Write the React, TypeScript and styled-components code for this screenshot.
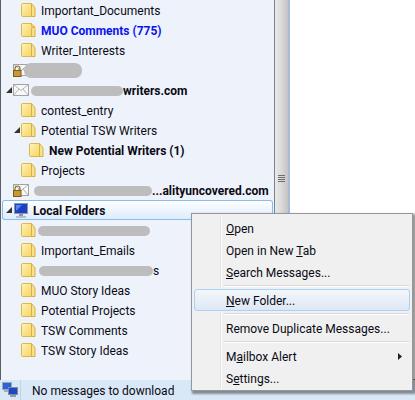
import React from "react";
import styled, { createGlobalStyle } from "styled-components";

const Global = createGlobalStyle`
  html, body { margin: 0; padding: 0; background: #fff; }
  body { font-family: Roboto, "Noto Sans", sans-serif; font-size: 12px; color: #0a0a14; }
`;

const Win = styled.div`
  position: relative;
  width: 415px;
  height: 400px;
  overflow: hidden;
  display: grid;
  grid-template-rows: 380px 20px;
`;
const Panes = styled.div`
  display: grid;
  grid-template-columns: 274px 16px 1fr;
  min-height: 0;
`;
const Tree = styled.div`
  background: #eef3fb;
  border-left: 1px solid #5a5f66;
  display: flex;
  flex-direction: column;
  overflow: hidden;
`;
const Row = styled.div<{ $level: number; $selected?: boolean }>`
  flex: 0 0 20px;
  height: 20px;
  box-sizing: border-box;
  display: flex;
  align-items: center;
  white-space: nowrap;
  padding-left: ${(p) => 5 + p.$level * 8}px;
  ${(p) =>
    p.$selected
      ? `margin: 0 1px 0 1px; padding-left: ${4 + p.$level * 8}px;
         box-shadow: inset 0 0 0 1px #84bdf0;
         border-radius: 3px;
         background: linear-gradient(#ffffff, #dcebfb);`
      : ""}
`;
const TwistySlot = styled.span`
  flex: 0 0 7px;
  height: 7px;
  display: flex;
  align-items: center;
`;
const Label = styled.span<{ $bold?: boolean; $color?: string }>`
  margin-left: 4px;
  padding-top: 1px;
  display: flex;
  align-items: center;
  font-weight: ${(p) => (p.$bold ? 700 : 400)};
  color: ${(p) => p.$color || "#0a0a14"};
`;
const Blob = styled.span<{ $w: number; $h?: number; $r?: number; $ml?: number }>`
  display: inline-block;
  width: ${(p) => p.$w}px;
  height: ${(p) => p.$h || 10}px;
  margin-left: ${(p) => p.$ml ?? -2}px;
  background: #bdbdbd;
  border-radius: ${(p) => p.$r ?? 5}px;
`;
const Scrollbar = styled.div`
  box-sizing: border-box;
  border-left: 1px solid #7f8287;
  border-right: 2px solid #a9bbd2;
  background: linear-gradient(90deg, #e9e9e9, #dcdcdc 45%, #c4c4c4);
  display: flex;
  flex-direction: column;
  align-items: center;
  padding-top: 175px;
  gap: 1px;
`;
const Grip = styled.i`
  display: block;
  width: 7px;
  height: 1px;
  background: #6d6d6d;
`;
const Content = styled.div`
  background: #fff;
  border-bottom: 1px solid #8a8a8a;
`;
const Status = styled.div`
  background: #d9e8f7;
  display: flex;
  align-items: center;
  height: 20px;
`;
const StatusIcon = styled.div`
  flex: 0 0 21px;
  height: 20px;
  box-sizing: border-box;
  border-right: 1px solid #c3d3e4;
  display: flex;
  align-items: center;
  justify-content: center;
`;
const StatusText = styled.span`
  margin-left: 11px;
  padding-top: 1px;
`;
const Menu = styled.div`
  position: absolute;
  left: 191px;
  top: 213px;
  width: 222px;
  height: 178px;
  box-sizing: border-box;
  border: 1px solid #979797;
  background: #f0f0f0;
  box-shadow: 2px 2px 2px 1px rgba(0, 0, 0, 0.4);
  padding: 3px 2px;
  display: flex;
  flex-direction: column;
  &::before {
    content: "";
    position: absolute;
    left: 28px;
    top: 2px;
    bottom: 2px;
    width: 1px;
    background: #e2e3e3;
    box-shadow: 1px 0 0 #fff;
  }
`;
const Item = styled.div<{ $active?: boolean }>`
  position: relative;
  flex: 0 0 22px;
  height: 22px;
  box-sizing: border-box;
  display: flex;
  align-items: center;
  justify-content: space-between;
  padding: 1px 8px 0 32px;
  border-radius: 3px;
  ${(p) =>
    p.$active
      ? `border: 1px solid #a8d2f7; padding: 1px 7px 0 31px;
         background: linear-gradient(#f3f6fa, #dde8f5);`
      : ""}
`;
const Sep = styled.div`
  flex: 0 0 2px;
  height: 2px;
  box-sizing: border-box;
  margin: 2px 1px 2px 30px;
  background: #d7d7d7;
  border-bottom: 1px solid #fff;
`;

const Folder = ({ fresh }: { fresh?: boolean }) => (
  <svg width="16" height="14" viewBox="0 0 16 14" style={{ flex: "0 0 16px" }}>
    <defs>
      <linearGradient id="fg" x1="0" x2="1" y1="0" y2="1">
        <stop offset="0" stopColor="#fff3b4" />
        <stop offset="1" stopColor="#f6d468" />
      </linearGradient>
    </defs>
    <path d="M0.5 1.5 Q0.5 .5 1.5 .5 H10.5 V13.5 H1.5 Q0.5 13.5 .5 12.5Z" fill="url(#fg)" stroke="#dcb94f" />
    <path d="M10.5 .5 L14 5 V13.5 H10.5Z" fill="#f9e08a" stroke="#d8b13f" />
    {fresh && <path d="M12 1 L13 3 L15 3 L13.6 4.4 L14.2 6.4 L12.4 5.2 L10.8 6.2 L11.2 4.2 L10 3 L11.8 3Z" fill="#f3a93a" stroke="#fff0b0" strokeWidth=".4" />}
  </svg>
);
const Twisty = () => (
  <svg width="6" height="6" viewBox="0 0 6 6">
    <path d="M6 0 V6 H0Z" fill="#333" />
  </svg>
);
const Mail = ({ lock }: { lock?: boolean }) => (
  <svg width="16" height="16" viewBox="0 0 16 16" style={{ flex: "0 0 16px" }}>
    <rect x=".5" y="2.5" width="15" height="11" fill="#f8f8f8" stroke="#a3a3a3" />
    <path d="M.5 2.5 L8 8.5 L15.5 2.5 M.5 13.5 L6 7 M15.5 13.5 L10 7" fill="none" stroke="#b5b5b5" />
    {lock && (
      <g>
        <path d="M2 9 V6.5 a2.5 2.5 0 0 1 5 0 V9" fill="none" stroke="#8a6d28" strokeWidth="1.2" />
        <rect x=".5" y="8.5" width="7.5" height="6" fill="#c79a33" stroke="#7d5c18" />
      </g>
    )}
  </svg>
);
const Computer = () => (
  <svg width="16" height="16" viewBox="0 0 16 16" style={{ flex: "0 0 auto" }}>
    <rect x="1.5" y="1.5" width="13" height="10" fill="#1d3fc4" stroke="#8d98a8" />
    <path d="M3 3 H9 L3 9Z" fill="#4f8ae8" />
    <rect x="6" y="12" width="4" height="2" fill="#8f969f" />
    <rect x="3" y="14" width="10" height="2" fill="#b8bec6" />
  </svg>
);
const Network = () => (
  <svg width="16" height="16" viewBox="0 0 16 16">
    <rect x=".5" y=".5" width="9" height="7" fill="#2b63d8" stroke="#9aa8bb" />
    <rect x="2" y="8" width="6" height="2" fill="#a5acb5" />
    <rect x="6.5" y="5.5" width="9" height="7" fill="#1d49c4" stroke="#7f8ca0" />
    <rect x="8" y="13" width="6" height="2" fill="#959ca5" />
  </svg>
);

const Arrow = () => (
  <svg width="4" height="7" viewBox="0 0 4 7">
    <path d="M0 0 L4 3.5 L0 7Z" fill="#222" />
  </svg>
);

export default function App() {
  return (
    <Win>
      <Global />
      <Panes>
        <Tree>
          <Row $level={1}><TwistySlot /><Folder /><Label>Important_Documents</Label></Row>
          <Row $level={1}><TwistySlot /><Folder fresh /><Label $bold $color="#0a14f0">MUO Comments (775)</Label></Row>
          <Row $level={1}><TwistySlot /><Folder /><Label>Writer_Interests</Label></Row>
          <Row $level={0}><TwistySlot /><Mail lock /><Label><Blob $w={58} $h={15} $r={7} $ml={-9} /></Label></Row>
          <Row $level={0}><TwistySlot><Twisty /></TwistySlot><Mail /><Label $bold><Blob $w={92} />writers.com</Label></Row>
          <Row $level={1}><TwistySlot /><Folder /><Label>contest_entry</Label></Row>
          <Row $level={1}><TwistySlot><Twisty /></TwistySlot><Folder /><Label>Potential TSW Writers</Label></Row>
          <Row $level={2}><TwistySlot /><Folder /><Label $bold>New Potential Writers (1)</Label></Row>
          <Row $level={1}><TwistySlot /><Folder /><Label>Projects</Label></Row>
          <Row $level={0}><TwistySlot /><Mail lock /><Label $bold><Blob $w={118} $ml={1} />...alityuncovered.com</Label></Row>
          <Row $level={0} $selected><TwistySlot><Twisty /></TwistySlot><Computer /><Label $bold>Local Folders</Label></Row>
          <Row $level={1}><TwistySlot /><Folder /><Label><Blob $w={112} $ml={-3} /></Label></Row>
          <Row $level={1}><TwistySlot /><Folder /><Label>Important_Emails</Label></Row>
          <Row $level={1}><TwistySlot /><Folder /><Label><Blob $w={114} />s</Label></Row>
          <Row $level={1}><TwistySlot /><Folder /><Label>MUO Story Ideas</Label></Row>
          <Row $level={1}><TwistySlot /><Folder /><Label>Potential Projects</Label></Row>
          <Row $level={1}><TwistySlot /><Folder /><Label>TSW Comments</Label></Row>
          <Row $level={1}><TwistySlot /><Folder /><Label>TSW Story Ideas</Label></Row>
        </Tree>
        <Scrollbar><Grip /><Grip /><Grip /><Grip /></Scrollbar>
        <Content />
      </Panes>
      <Status>
        <StatusIcon><Network /></StatusIcon>
        <StatusText>No messages to download</StatusText>
      </Status>
      <Menu>
        <Item><span><u>O</u>pen</span></Item>
        <Item><span>Open in New <u>T</u>ab</span></Item>
        <Item><span><u>S</u>earch Messages...</span></Item>
        <Sep />
        <Item $active><span><u>N</u>ew Folder...</span></Item>
        <Sep />
        <Item><span>Remove Duplicate Messages...</span></Item>
        <Sep />
        <Item><span>M<u>a</u>ilbox Alert</span><Arrow /></Item>
        <Item><span>S<u>e</u>ttings...</span></Item>
      </Menu>
    </Win>
  );
}
